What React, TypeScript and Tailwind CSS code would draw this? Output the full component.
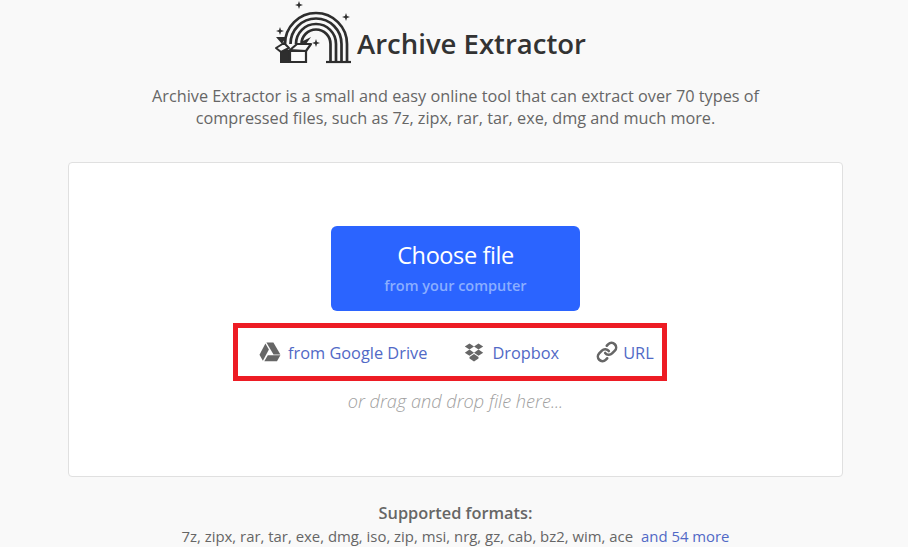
import React from "react";

const Logo = () => (
  <svg width="78" height="64" viewBox="0 0 78 64" fill="none" className="shrink-0">
    <g stroke="#2e2e2e" strokeWidth="2.7" fill="none">
      <path d="M11 44 A31 31 0 0 1 73 44 V62" />
      <path d="M16.5 44 A25.5 25.5 0 0 1 67.5 44 V62" />
      <path d="M22 44 A20 20 0 0 1 62 44 V62" />
      <path d="M27.5 44 A14.5 14.5 0 0 1 56.5 44 V62" />
      <path d="M52 62 H77" strokeWidth="2.2" />
    </g>
    <path d="M6 50 H16 V63 H6 Z" fill="#2e2e2e" />
    <path d="M16 51 H32 V62 H16 Z" fill="#fafafa" stroke="#2e2e2e" strokeWidth="2.2" />
    <path d="M2 48 L10 43 L15 48 L7 52 Z" fill="#fafafa" stroke="#2e2e2e" strokeWidth="2" strokeLinejoin="round" />
    <path d="M2 37 H12 L8 44 Z" fill="#2e2e2e" />
    <path d="M16 50 L23 44 H37 L32 51 Z" fill="#fafafa" stroke="#2e2e2e" strokeWidth="2.2" strokeLinejoin="round" />
    <path d="M27 42 L37 37 L32 44 Z" fill="#2e2e2e" />
    <g fill="#2e2e2e">
      <path d="M25 1 L26 4 L29 5 L26 6 L25 9 L24 6 L21 5 L24 4 Z" />
      <path d="M72 13 L73 16 L76 17 L73 18 L72 21 L71 18 L68 17 L71 16 Z" />
      <path d="M42 39 L43 42 L46 43 L43 44 L42 47 L41 44 L38 43 L41 42 Z" />
      <path d="M6 27 L7 30 L10 31 L7 32 L6 35 L5 32 L2 31 L5 30 Z" />
    </g>
  </svg>
);

const Drive = () => (
  <svg width="22" height="20" viewBox="0 0 22 20" fill="#666666">
    <path d="M7.4 0.5 H14.4 L21.4 12.5 H14.5 Z" />
    <path d="M6.4 1.5 L9.9 7.5 L3.9 18.8 L0.5 12.7 Z" />
    <path d="M5.3 19.3 L8.8 13.3 H21.4 L18 19.3 Z" />
  </svg>
);

const Dropbox = () => (
  <svg width="20" height="19" viewBox="0 0 20 19" fill="#666666">
    <path d="M5.5 0.5 L10 3.6 L5.5 6.6 L0.8 3.6 Z" />
    <path d="M14.5 0.5 L19.2 3.6 L14.5 6.6 L10 3.6 Z" />
    <path d="M5.5 6.6 L10 9.7 L5.5 12.8 L0.8 9.7 Z" />
    <path d="M14.5 6.6 L19.2 9.7 L14.5 12.8 L10 9.7 Z" />
    <path d="M5.5 14 L10 11 L14.5 14 L14.5 15.4 L10 18.5 L5.5 15.4 Z" />
  </svg>
);

const LinkIcon = () => (
  <svg width="22" height="22" viewBox="0 0 24 24" fill="none" stroke="#666666" strokeWidth="2.8" strokeLinecap="round" strokeLinejoin="round">
    <path d="M10 13a5 5 0 0 0 7.54.54l3-3a5 5 0 0 0-7.07-7.07l-1.72 1.71" />
    <path d="M14 11a5 5 0 0 0-7.54-.54l-3 3a5 5 0 0 0 7.07 7.07l1.71-1.71" />
  </svg>
);

export default function App() {
  return (
    <div className="h-[547px] w-[908px] overflow-hidden bg-[#f9f9f9] font-['Open_Sans',sans-serif] text-[#666666]">
      <div className="ml-[68px] flex w-[775px] flex-col items-center">
        <header className="mr-[51px] flex h-[64px] items-end gap-[5px]">
          <Logo />
          <h1 className="pb-[2px] text-[27.5px] font-semibold leading-[36px] text-[#333333]">Archive Extractor</h1>
        </header>
        <p className="mt-[21px] whitespace-nowrap text-center text-[16.25px] leading-[22px]">
          Archive Extractor is a small and easy online tool that can extract over 70 types of
          <br />
          compressed files, such as 7z, zipx, rar, tar, exe, dmg and much more.
        </p>
        <section className="mt-[33px] flex h-[315px] w-[775px] flex-col items-center rounded-[4px] border border-[#e0e0e0] bg-white pt-[63px]">
          <button className="flex h-[85px] w-[249px] flex-col items-center rounded-[6px] bg-[#2b64ff] pt-[12px]">
            <span className="text-[23.5px] leading-[34px] tracking-[-0.4px] text-white">Choose file</span>
            <span className="mt-[4px] text-[14.5px] font-semibold leading-[20px] text-[#8aaeff]">from your computer</span>
          </button>
          <nav className="mt-[12px] mr-[11px] flex h-[58px] w-[434px] items-center border-[5px] border-[#ed1c24] pl-[21px] pt-[1px] text-[16.35px] text-[#5169c6]">
            <a className="flex items-center gap-[7px]"><Drive /><span className="mt-[2px]">from Google Drive</span></a>
            <a className="ml-[37px] flex items-center gap-[8px]"><Dropbox /><span className="mt-[2px]">Dropbox</span></a>
            <a className="ml-[37px] flex items-center gap-[5px]"><LinkIcon /><span className="mt-[2px]">URL</span></a>
          </nav>
          <p className="mt-[7px] text-[18.15px] font-light italic leading-[26px] text-[#a0a0a0]">or drag and drop file here...</p>
        </section>
        <p className="mt-[26px] text-[16.35px] font-semibold leading-[20px]">Supported formats:</p>
        <p className="mt-[3px] whitespace-nowrap text-[14.9px] leading-[20px]">
          7z, zipx, rar, tar, exe, dmg, iso, zip, msi, nrg, gz, cab, bz2, wim, ace
          <a className="ml-[8px] text-[#5169c6]">and 54 more</a>
        </p>
      </div>
    </div>
  );
}
